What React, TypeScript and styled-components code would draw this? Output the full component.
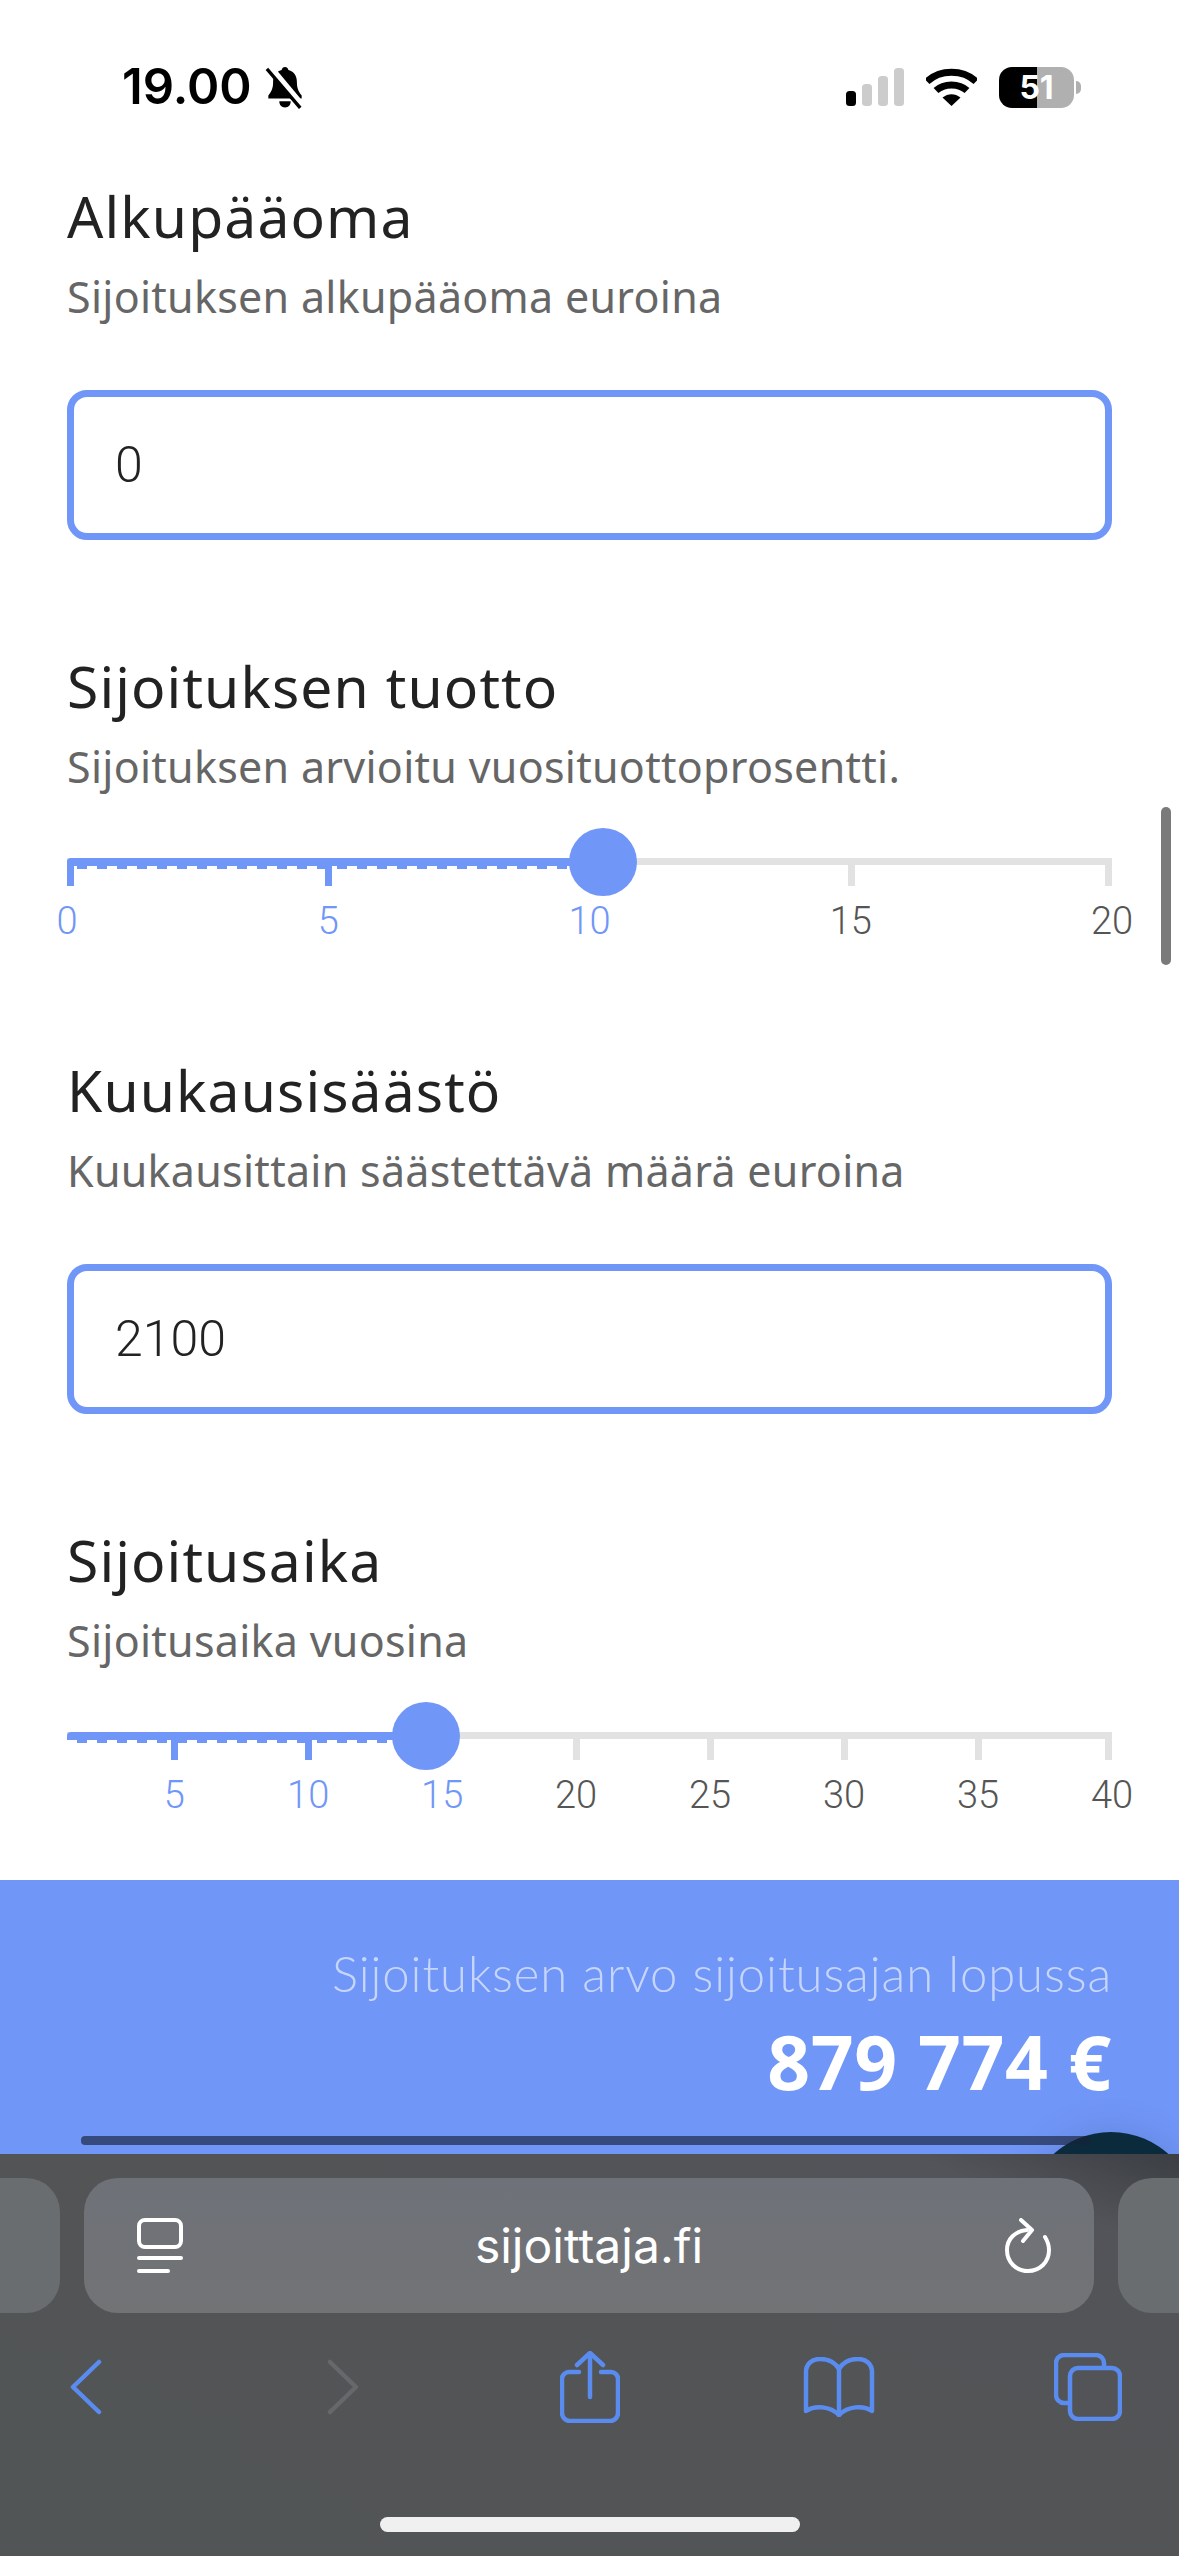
import styled, { createGlobalStyle } from 'styled-components'

const GlobalStyle = createGlobalStyle`
    html, body {
        margin: 0;
        padding: 0;
        background: #fff;
    }
`

const Page = styled.div`
    position: relative;
    width: 1179px;
    height: 2556px;
    display: flex;
    flex-direction: column;
    overflow: hidden;
    background: #fff;
    font-family: "Noto Sans", sans-serif;
`

// status bar
const StatusBar = styled.header`
    height: 178px;
    box-sizing: border-box;
    padding: 60px 105px 0 122px;
    display: flex;
    justify-content: space-between;
    align-items: flex-start;
`
const StatusLeft = styled.div`
    display: flex;
    align-items: center;
    gap: 13px;
`
const Time = styled.span`
    font-family: "Inter", sans-serif;
    font-weight: 600;
    font-size: 49px;
    line-height: 54px;
    color: #000;
`
const StatusRight = styled.div`
    display: flex;
    align-items: center;
    height: 54px;
    gap: 22px;
`
const Battery = styled.div`
    position: relative;
    width: 75px;
    height: 41px;
    border-radius: 13px;
    background: linear-gradient(90deg, #000 0 51%, #b0b0b0 51% 100%);
    color: #fff;
    font-family: "Inter", sans-serif;
    font-weight: 700;
    font-size: 32px;
    line-height: 41px;
    text-align: center;
    &::after {
        content: '';
        position: absolute;
        left: 77px;
        top: 14px;
        width: 5px;
        height: 13px;
        border-radius: 0 6px 6px 0;
        background: #b0b0b0;
    }
`

// form
const Form = styled.main`
    flex: 1;
    padding: 0 67px;
    display: flex;
    flex-direction: column;
    gap: 108px;
`
const Section = styled.section``
const Title = styled.h2`
    margin: 0 0 13px;
    font-weight: 400;
    font-size: 57px;
    line-height: 76px;
    letter-spacing: 1.1px;
    color: #222;
`
const Description = styled.p`
    margin: 0;
    font-size: 43px;
    line-height: 60px;
    letter-spacing: 0.28px;
    color: #666;
`
const Input = styled.input`
    display: block;
    width: 100%;
    height: 150px;
    box-sizing: border-box;
    margin-top: 63px;
    padding: 0 41px;
    border: 7px solid #7096f8;
    border-radius: 20px;
    outline: none;
    background: #fff;
    font-family: "Roboto", sans-serif;
    font-weight: 300;
    font-size: 50px;
    color: #222;
`

// slider
const Slider = styled.div`
    position: relative;
    height: 116px;
    margin-top: 31px;
`
const Track = styled.div`
    position: absolute;
    left: 0;
    right: 0;
    top: 30px;
    height: 7px;
    background: #e2e2e2;
`
const Filled = styled.div`
    position: absolute;
    left: 0;
    top: 30px;
    height: 8px;
    border-radius: 4px 0 0 0;
    background: #7096f8;
    &::after {
        content: '';
        position: absolute;
        left: 0;
        right: 0;
        top: 8px;
        height: 3px;
        background: repeating-linear-gradient(90deg, #fff 0 10px, #7096f8 10px 20px);
    }
`
const Tick = styled.span<{ $active: boolean }>`
    position: absolute;
    top: 32px;
    width: 7px;
    height: 26px;
    background: ${props => props.$active ? '#7096f8' : '#e2e2e2'};
`
const TickLabel = styled.span<{ $active: boolean }>`
    position: absolute;
    top: 72px;
    transform: translateX(-50%);
    font-family: "Roboto", sans-serif;
    font-weight: 300;
    font-size: 38px;
    line-height: 42px;
    color: ${props => props.$active ? '#7096f8' : '#555'};
`
const Thumb = styled.div`
    position: absolute;
    top: 0;
    width: 68px;
    height: 68px;
    margin-left: -34px;
    border-radius: 50%;
    background: #7096f8;
`
const ScrollIndicator = styled.div`
    position: absolute;
    left: 1161px;
    top: 807px;
    width: 10px;
    height: 158px;
    border-radius: 5px;
    background: #7a7a7a;
`

// result strip
const Result = styled.section`
    position: relative;
    height: 274px;
    box-sizing: border-box;
    padding: 64px 67px 0;
    overflow: hidden;
    text-align: right;
    background: #7096f8;
    color: #fff;
`
const ResultLabel = styled.div`
    font-family: "Lato", sans-serif;
    font-weight: 300;
    font-size: 49px;
    line-height: 58px;
    letter-spacing: 0.9px;
    color: #c6d5fc;
`
const ResultValue = styled.div`
    font-weight: 700;
    font-size: 75px;
    line-height: 90px;
    letter-spacing: 0.6px;
    margin-top: 14px;
`
const ResultScrollbar = styled.div`
    position: absolute;
    left: 81px;
    top: 256px;
    width: 1009px;
    height: 9px;
    border-radius: 4px;
    background: rgba(25, 34, 57, 0.65);
`
const ChatBubble = styled.div`
    position: absolute;
    left: 1025px;
    top: 252px;
    width: 172px;
    height: 172px;
    border-radius: 50%;
    background: #0b2b3c;
    box-shadow: 0 0 40px rgba(0, 0, 0, 0.12);
`

// safari chrome
const Browser = styled.footer`
    position: relative;
    height: 402px;
    display: flex;
    flex-direction: column;
    background: linear-gradient(200deg, #3b3e42 0, #525459 12%, #525456 40%, #525556 100%);
`
const TabRow = styled.div`
    margin-top: 24px;
    height: 135px;
    display: grid;
    grid-template-columns: 60px 1010px 1fr;
    gap: 24px;
`
const SideTab = styled.div<{ $side: 'left' | 'right' }>`
    background: #6a6d70;
    border-radius: ${props => props.$side === 'left' ? '0 34px 34px 0' : '34px 0 0 34px'};
`
const AddressPill = styled.div`
    display: grid;
    grid-template-columns: 1fr auto 1fr;
    align-items: center;
    padding: 0 42px 0 53px;
    border-radius: 34px;
    background: linear-gradient(180deg, #6e7178, #717375);
    svg:last-child {
        justify-self: end;
    }
`
const Address = styled.span`
    margin-right: 11px;
    font-family: "Inter", sans-serif;
    font-size: 48px;
    color: #fff;
`
const Toolbar = styled.nav`
    height: 71px;
    margin-top: 38px;
    padding-left: 70px;
    display: grid;
    grid-template-columns: 257px 233px 243px 251px auto;
    align-items: center;
`
const HomeBar = styled.div`
    width: 420px;
    height: 15px;
    margin: 95px auto 0;
    border-radius: 8px;
    background: #f0f0f0;
`

interface SliderProps {
    min: number,
    max: number,
    value: number,
    ticks: number[],
}

const RangeSlider = ({ min, max, value, ticks }: SliderProps) => {
    const pct = (v: number) => ((v - min) / (max - min)) * 100
    return <Slider>
        <Track />
        <Filled style={{ width: `${pct(value)}%` }} />
        {
            ticks.map(t => {
                const edge = t === min || t === max
                return <Tick
                    key={t}
                    $active={t <= value}
                    style={t === max
                        ? { right: 0 }
                        : { left: edge ? 0 : `calc(${pct(t)}% - 3px)` }}
                />
            })
        }
        {
            ticks.map(t => <TickLabel key={t} $active={t <= value + 1} style={{ left: `${pct(t)}%` }}>{t}</TickLabel>)
        }
        <Thumb style={{ left: `${pct(value)}%` }} />
    </Slider>
}

const BLUE = '#5a8cf0'

export default function App() {
    return <Page>
        <GlobalStyle />
        <StatusBar>
            <StatusLeft>
                <Time>19.00</Time>
                <svg width="40" height="44" viewBox="0 0 42 44">
                    <path d="M21 1c2 0 3.500 1.500 3.500 3.200C31 6 33.500 11 33.500 17c0 6 1.500 9.500 5 14v3H3.500v-3c3.500-4.500 5-8 5-14 0-6 2.500-11 9-12.800C17.500 2.500 19 1 21 1z" fill="#000" />
                    <path d="M15 37h12c0 4-2.500 6.500-6 6.500S15 41 15 37z" fill="#000" />
                    <path d="M5 1l35 42" stroke="#fff" strokeWidth="7" />
                    <path d="M2 3l35 41" stroke="#000" strokeWidth="3.500" />
                </svg>
            </StatusLeft>
            <StatusRight>
                <svg width="58" height="38" viewBox="0 0 58 38">
                    <rect x="0" y="23" width="10" height="15" rx="3.500" fill="#000" />
                    <rect x="16" y="16" width="10" height="22" rx="3.500" fill="#ccc" />
                    <rect x="32" y="8" width="10" height="30" rx="3.500" fill="#ccc" />
                    <rect x="48" y="0" width="10" height="38" rx="3.500" fill="#ccc" />
                </svg>
                <svg width="51" height="38" viewBox="0 0 51 38">
                    <path d="M1 13.500C14 1 37 1 50 13.500" fill="none" stroke="#000" strokeWidth="7" />
                    <path d="M10 22.500C18 15 33 15 41 22.500" fill="none" stroke="#000" strokeWidth="7" />
                    <path d="M16.500 29.500C22 25 29 25 34.500 29.500L25.500 38z" fill="#000" />
                </svg>
                <Battery>51</Battery>
            </StatusRight>
        </StatusBar>

        <Form>
            <Section>
                <Title>Alkupääoma</Title>
                <Description>Sijoituksen alkupääoma euroina</Description>
                <Input readOnly value="0" />
            </Section>
            <Section>
                <Title>Sijoituksen tuotto</Title>
                <Description>Sijoituksen arvioitu vuosituottoprosentti.</Description>
                <RangeSlider min={0} max={20} value={10.25} ticks={[0, 5, 10, 15, 20]} />
            </Section>
            <Section>
                <Title>Kuukausisäästö</Title>
                <Description>Kuukausittain säästettävä määrä euroina</Description>
                <Input readOnly value="2100" />
            </Section>
            <Section>
                <Title>Sijoitusaika</Title>
                <Description>Sijoitusaika vuosina</Description>
                <RangeSlider min={1} max={40} value={14.4} ticks={[5, 10, 15, 20, 25, 30, 35, 40]} />
            </Section>
        </Form>

        <Result>
            <ResultLabel>Sijoituksen arvo sijoitusajan lopussa</ResultLabel>
            <ResultValue>879 774 €</ResultValue>
            <ChatBubble />
            <ResultScrollbar />
        </Result>

        <Browser>
            <TabRow>
                <SideTab $side="left" />
                <AddressPill>
                    <svg width="46" height="56" viewBox="0 0 46 56" fill="none" stroke="#fff" strokeWidth="4" strokeLinecap="round">
                        <rect x="2" y="2" width="42" height="27" rx="6" />
                        <path d="M2 40h42" />
                        <path d="M2 53h29" />
                    </svg>
                    <Address>sijoittaja.fi</Address>
                    <svg width="48" height="56" viewBox="0 0 48 56" fill="none" stroke="#fff" strokeWidth="4" strokeLinecap="round" strokeLinejoin="round">
                        <path d="M23 12C11 13 3 21 3 32c0 12 9 21 21 21s21-9 21-21c0-5-1.500-9-4-13" />
                        <path d="M17 2l11 10-9 11" />
                    </svg>
                </AddressPill>
                <SideTab $side="right" />
            </TabRow>
            <Toolbar>
                <svg width="32" height="56" viewBox="0 0 32 56" fill="none" stroke={BLUE} strokeWidth="4.500" strokeLinecap="round" strokeLinejoin="round">
                    <path d="M29 3L3 28l26 25" />
                </svg>
                <svg width="32" height="56" viewBox="0 0 32 56" fill="none" stroke="#66686b" strokeWidth="4.500" strokeLinecap="round" strokeLinejoin="round">
                    <path d="M3 3l26 25L3 53" />
                </svg>
                <svg width="60" height="72" viewBox="0 0 60 72" fill="none" stroke={BLUE} strokeWidth="4.500" strokeLinecap="round" strokeLinejoin="round">
                    <path d="M19 21H9a7 7 0 0 0-7 7v34a8 8 0 0 0 8 8h40a8 8 0 0 0 8-8V28a7 7 0 0 0-7-7H41" />
                    <path d="M30 46V3" />
                    <path d="M17 14L30 2l13 12" />
                </svg>
                <svg width="72" height="60" viewBox="0 0 72 60" fill="none" stroke={BLUE} strokeWidth="4.500" strokeLinecap="round" strokeLinejoin="round">
                    <path d="M36 12C32 5 25 2 17 2 9 2 3 7 3 15v39c9-6 24-5 33 4 9-9 24-10 33-4V15c0-8-6-13-14-13-8 0-15 3-19 10z" />
                    <path d="M36 12v46" />
                </svg>
                <svg width="68" height="68" viewBox="0 0 68 68" fill="none" stroke={BLUE} strokeWidth="4.500" strokeLinejoin="round">
                    <path d="M15 50H10a8 8 0 0 1-8-8V10a8 8 0 0 1 8-8h32a8 8 0 0 1 8 8v4" />
                    <rect x="16" y="15" width="50" height="51" rx="8" />
                </svg>
            </Toolbar>
            <HomeBar />
        </Browser>
        <ScrollIndicator />
    </Page>
}
